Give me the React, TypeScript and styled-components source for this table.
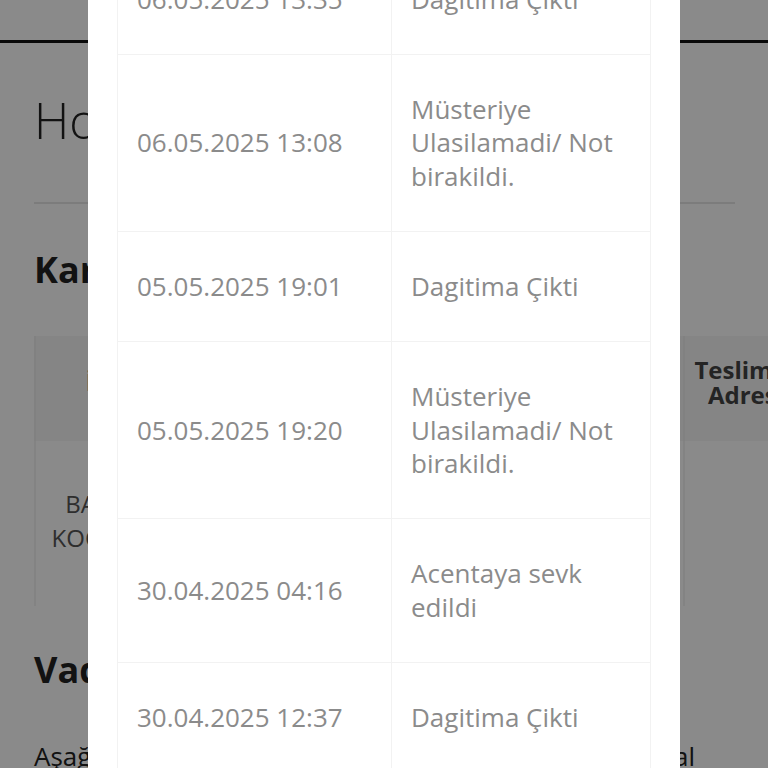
import React, { useLayoutEffect, useRef } from "react";
import styled, { createGlobalStyle } from "styled-components";

const GlobalStyle = createGlobalStyle`
  html, body { margin: 0; padding: 0; background: #ffffff; }
  body { font-family: "Open Sans", "Liberation Sans", sans-serif; overflow: hidden; }
  * { box-sizing: border-box; }
`;

/* ---------- background page ---------- */
const Page = styled.div`
  width: 768px;
  height: 768px;
  overflow: hidden;
  background: #ffffff;
`;

const TopBar = styled.header`
  height: 43px;
  border-bottom: 3px solid #111111;
  background: #ffffff;
`;

const Main = styled.main`
  padding: 0 33px 0 34px;
  color: #222222;
`;

const PageTitle = styled.h1`
  margin: 47px 0 0;
  font-size: 49px;
  font-weight: 300;
  line-height: 60px;
  white-space: nowrap;
`;

const Rule = styled.hr`
  margin: 52px 0 0;
  border: 0;
  border-top: 2px solid #e6e6e6;
`;

const SectionTitle = styled.h2<{ $top: number }>`
  margin: ${(p) => p.$top}px 0 0;
  font-size: 36px;
  font-weight: 700;
  line-height: 44px;
  color: #222222;
  white-space: nowrap;
`;

const InfoGrid = styled.div`
  margin-top: 44px;
  width: 900px;
  display: grid;
  grid-template-columns: 200px 449px 124px;
`;

const InfoHead = styled.div`
  height: 105px;
  padding-bottom: 14px;
  background: #f6f6f6;
  border-left: 2px solid #efefef;
  display: flex;
  align-items: center;
  justify-content: center;
  text-align: center;
  font-size: 24px;
  font-weight: 700;
  line-height: 25px;
  color: #444444;
`;

const HeadText = styled.span`
  display: block;
  text-align: center;
`;

const InfoCell = styled.div`
  height: 165px;
  padding-top: 46px;
  border-left: 2px solid #f2f2f2;
  text-align: center;
  font-size: 24px;
  line-height: 34px;
  color: #555555;
`;

const Paragraph = styled.p`
  margin: 46px 0 0;
  width: 661px;
  font-size: 26px;
  line-height: 36px;
  color: #222222;
  text-align: justify;
  text-align-last: justify;
`;

/* ---------- modal ---------- */
const Overlay = styled.div`
  position: fixed;
  inset: 0;
  background: rgba(0, 0, 0, 0.46);
  overflow-y: auto;
  scrollbar-width: none;
  &::-webkit-scrollbar { display: none; }
`;

const Dialog = styled.div`
  width: 592px;
  margin: 30px auto 30px;
  background: #ffffff;
  padding: 29px 29px 40px;
`;

const DialogTitle = styled.h3`
  margin: 0 0 24px;
  font-size: 30px;
  font-weight: 600;
  color: #333333;
`;

const MoveTable = styled.table`
  width: 534px;
  border-collapse: collapse;
  table-layout: fixed;
`;

const Cell = styled.td<{ $w?: number }>`
  width: ${(p) => (p.$w ? `${p.$w}px` : "auto")};
  border: 1px solid #f2f2f2;
  padding: 38px 19px;
  font-size: 26px;
  line-height: 33.33px;
  color: #8b8b8b;
  vertical-align: middle;
`;

const HeadCell = styled.th<{ $w?: number }>`
  width: ${(p) => (p.$w ? `${p.$w}px` : "auto")};
  border: 1px solid #f2f2f2;
  padding: 24px 19px;
  font-size: 26px;
  line-height: 34px;
  font-weight: 700;
  color: #666666;
  text-align: left;
`;

const moves: [string, string][] = [
  ["07.05.2025 10:12", "Teslim Edildi"],
  ["07.05.2025 08:40", "Dagitima Çikti"],
  ["06.05.2025 13:35", "Dagitima Çikti"],
  ["06.05.2025 13:08", "Müsteriye Ulasilamadi/ Not birakildi."],
  ["05.05.2025 19:01", "Dagitima Çikti"],
  ["05.05.2025 19:20", "Müsteriye Ulasilamadi/ Not birakildi."],
  ["30.04.2025 04:16", "Acentaya sevk edildi"],
  ["30.04.2025 12:37", "Dagitima Çikti"],
  ["29.04.2025 18:05", "Kargo kabul edildi"],
];

const ANCHOR = 2;

export default function App() {
  const overlayRef = useRef<HTMLDivElement>(null);
  const anchorRef = useRef<HTMLTableRowElement>(null);

  useLayoutEffect(() => {
    const ov = overlayRef.current;
    const an = anchorRef.current;
    if (!ov || !an) return;
    const r = an.getBoundingClientRect();
    ov.scrollTop = ov.scrollTop + r.bottom - 54;
  }, []);

  return (
    <>
      <GlobalStyle />
      <Page>
        <TopBar />
        <Main>
          <PageTitle>Hoş Geldiniz</PageTitle>
          <Rule />
          <SectionTitle $top={44}>Kargo Bilgileri</SectionTitle>
          <InfoGrid>
            <InfoHead>
              <HeadText>İl / İlçesi</HeadText>
            </InfoHead>
            <InfoHead>
              <HeadText>Alıcı</HeadText>
            </InfoHead>
            <InfoHead>
              <HeadText>
                Teslimat
                <br />
                Adresi
              </HeadText>
            </InfoHead>
            <InfoCell>
              BAŞAKŞEHİR
              <br />
              KOCAELİ/İZMİT
            </InfoCell>
            <InfoCell>Ahmet Y.</InfoCell>
            <InfoCell />
          </InfoGrid>
          <SectionTitle $top={42}>Vade Bilgileri</SectionTitle>
          <Paragraph>Aşağıdaki tablodan bilgi al</Paragraph>
        </Main>
      </Page>
      <Overlay ref={overlayRef}>
        <Dialog>
          <DialogTitle>Kargo Hareketleri</DialogTitle>
          <MoveTable>
            <thead>
              <tr>
                <HeadCell $w={274}>Tarih</HeadCell>
                <HeadCell>Açıklama</HeadCell>
              </tr>
            </thead>
            <tbody>
              {moves.map(([d, t], i) => (
                <tr key={i} ref={i === ANCHOR ? anchorRef : undefined}>
                  <Cell $w={274}>{d}</Cell>
                  <Cell>{t}</Cell>
                </tr>
              ))}
            </tbody>
          </MoveTable>
        </Dialog>
      </Overlay>
    </>
  );
}
